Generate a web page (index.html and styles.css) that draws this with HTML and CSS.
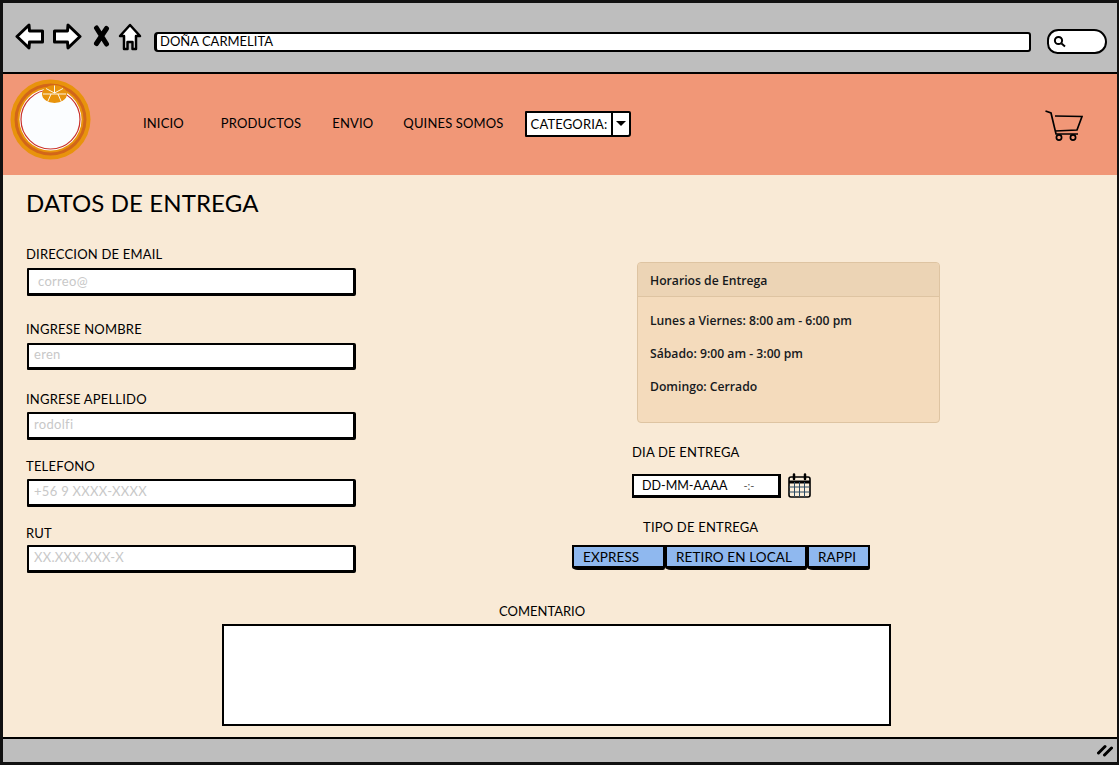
FILE: index.html
```html
<!DOCTYPE html>
<html lang="en">
<head>
    <meta charset="UTF-8">
    <meta name="viewport" content="width=device-width, initial-scale=1.0">
    <title>Doña Carmelita</title>
    <link rel="stylesheet" href="styles.css">
</head>
<body>
    <div class="window">
        <div class="toolbar">
            <svg class="tool-back" width="30" height="27" viewBox="0 0 30 27"><path d="M2 13.500 L14 2 L14.500 8 L27.500 8 L27.500 19 L14.500 19 L14 25 Z" fill="#fff" stroke="#000" stroke-width="3" stroke-linejoin="round"/></svg>
            <svg class="tool-forward" width="30" height="27" viewBox="0 0 30 27"><path d="M28 13.500 L16 2 L15.500 8 L2.500 8 L2.500 19 L15.500 19 L16 25 Z" fill="#fff" stroke="#000" stroke-width="3" stroke-linejoin="round"/></svg>
            <svg class="tool-stop" width="17" height="22" viewBox="0 0 17 22"><path d="M3.500 3 L13.500 19 M13.500 3.500 L3.500 18.500" stroke="#000" stroke-width="5" stroke-linecap="round"/></svg>
            <svg class="tool-home" width="24" height="28" viewBox="0 0 24 28"><path d="M12 2 L22 13 L18 13 L18 26 L14.500 26 L14.500 19 L9.500 19 L9.500 26 L6 26 L6 13 L2 13 Z" fill="#fff" stroke="#000" stroke-width="2.500" stroke-linejoin="round"/></svg>
            <div class="address">DOÑA CARMELITA</div>
            <div class="search">
                <svg width="13" height="13" viewBox="0 0 13 13"><circle cx="5.500" cy="5.500" r="3.600" fill="none" stroke="#000" stroke-width="2"/><path d="M8.500 8.500 L12 11.500" stroke="#000" stroke-width="2"/></svg>
            </div>
        </div>

        <header class="site-header">
            <svg class="logo" width="81" height="81" viewBox="0 0 81 81">
                <circle cx="40.500" cy="40.500" r="40" fill="#e8930c"/>
                <circle cx="40.500" cy="40.500" r="36" fill="#d2661a"/>
                <circle cx="40.500" cy="40.500" r="33" fill="#e8930c"/>
                <circle cx="40.500" cy="40.500" r="31" fill="#fff"/>
                <circle cx="40.500" cy="40.500" r="29.500" fill="#fbfdff" stroke="#c9322b" stroke-width="1.200"/>
                <ellipse cx="44.500" cy="15" rx="12.500" ry="9" fill="#e8930c"/>
                <path d="M44.500 6.500 V14 M36 9.500 L44.500 14 L53 9.500 M33 15 H56 M38 22 L41 15 M51 22 L48 15" stroke="#fff" stroke-width="0.900" fill="none"/>
            </svg>
            <nav class="nav">
                <a class="nav-inicio">INICIO</a>
                <a class="nav-productos">PRODUCTOS</a>
                <a class="nav-envio">ENVIO</a>
                <a class="nav-quines">QUINES SOMOS</a>
                <div class="category">
                    <span class="category-text">CATEGORIA:</span>
                    <span class="category-arrow"></span>
                </div>
            </nav>
            <svg class="cart" width="38" height="33" viewBox="0 0 38 33">
                <path d="M0.500 2 L6 4 L11 25 L33 25" fill="none" stroke="#000" stroke-width="1.700"/>
                <path d="M10 7 L37 7.500 L32 21 L10 22" fill="none" stroke="#000" stroke-width="1.700"/>
                <circle cx="14" cy="28.500" r="2.600" fill="none" stroke="#000" stroke-width="1.700"/>
                <circle cx="28" cy="28.500" r="2.600" fill="none" stroke="#000" stroke-width="1.700"/>
            </svg>
        </header>

        <main class="content">
            <div class="columns">
                <section class="delivery-form">
                    <h1>DATOS DE ENTREGA</h1>
                    <div class="field">
                        <label>DIRECCION DE EMAIL</label>
                        <div class="input placeholder-wide">correo@</div>
                    </div>
                    <div class="field">
                        <label>INGRESE NOMBRE</label>
                        <div class="input">eren</div>
                    </div>
                    <div class="field">
                        <label>INGRESE APELLIDO</label>
                        <div class="input">rodolfi</div>
                    </div>
                    <div class="field">
                        <label>TELEFONO</label>
                        <div class="input">+56 9 XXXX-XXXX</div>
                    </div>
                    <div class="field">
                        <label>RUT</label>
                        <div class="input">XX.XXX.XXX-X</div>
                    </div>
                </section>

                <section class="delivery-side">
                    <div class="hours-card">
                        <div class="hours-title">Horarios de Entrega</div>
                        <div class="hours-body">
                            <p>Lunes a Viernes: 8:00 am - 6:00 pm</p>
                            <p>Sábado: 9:00 am - 3:00 pm</p>
                            <p>Domingo: Cerrado</p>
                        </div>
                    </div>
                    <div class="date-label">DIA DE ENTREGA</div>
                    <div class="date-row">
                        <div class="date-input"><span>DD-MM-AAAA</span><span class="date-time">-:-</span></div>
                        <svg width="23" height="25" viewBox="0 0 23 25">
                            <rect x="1" y="4" width="21" height="20" rx="2" fill="#fbeeda" stroke="#000" stroke-width="1.600"/>
                            <path d="M1 9 H22" stroke="#000" stroke-width="3"/>
                            <path d="M1 14 H22 M1 19 H22 M6.500 9 V24 M11.500 9 V24 M16.500 9 V24" stroke="#2c4a63" stroke-width="1"/>
                            <path d="M6 6 V1.500 M17 6 V1.500" stroke="#000" stroke-width="2.500" stroke-linecap="round"/>
                        </svg>
                    </div>
                    <div class="type-label">TIPO DE ENTREGA</div>
                    <div class="type-buttons">
                        <button class="type-express">EXPRESS</button>
                        <button class="type-retiro">RETIRO EN LOCAL</button>
                        <button class="type-rappi">RAPPI</button>
                    </div>
                </section>
            </div>

            <section class="comment">
                <div class="comment-label">COMENTARIO</div>
                <div class="comment-box"></div>
            </section>
        </main>

        <footer class="statusbar">
            <svg width="16" height="13" viewBox="0 0 16 13"><path d="M1.500 9 L8 2.500 M7.500 11 L14.500 4" stroke="#000" stroke-width="3" stroke-linecap="round"/></svg>
        </footer>
    </div>
</body>
</html>
```

FILE: styles.css
```css
* {
    box-sizing: border-box;
}
html, body {
    margin: 0;
    padding: 0;
}
body {
    width: 1119px;
    height: 766px;
    overflow: hidden;
    background-color: #fff;
    font-family: "Lato", "Liberation Sans", sans-serif;
    font-size: 13px;
    letter-spacing: 0.2px;
    color: #000;
}
.window {
    width: 1119px;
    height: 765px;
    border: 3px solid #111;
    border-right-width: 2px;
    display: flex;
    flex-direction: column;
}

/* browser bar */
.toolbar {
    height: 71px;
    flex: none;
    background-color: #bebebe;
    border-bottom: 2px solid #000;
    display: flex;
    align-items: center;
    padding-left: 12px;
    padding-bottom: 4px;
}
.tool-back {
    margin-top: 2px;
}
.tool-forward {
    margin-left: 7px;
    margin-top: 2px;
}
.tool-stop {
    margin-left: 11px;
    margin-top: 0;
}
.tool-home {
    margin-left: 8px;
    margin-top: 2px;
}
.address {
    width: 877px;
    height: 20px;
    margin-left: 12px;
    margin-top: 12px;
    background-color: #fff;
    border: 2px solid #000;
    border-left-width: 3px;
    border-radius: 4px 3px 3px 4px;
    padding-left: 3px;
    font-size: 13px;
    letter-spacing: 0;
    line-height: 15px;
}
.search {
    width: 60px;
    height: 25px;
    margin-left: 16px;
    margin-top: 12px;
    background-color: #fff;
    border: 2px solid #000;
    border-radius: 14px 16px 15px 13px;
    display: flex;
    align-items: center;
    padding-left: 4px;
}

/* site header */
.site-header {
    height: 101px;
    flex: none;
    background-color: #f19777;
    display: flex;
    align-items: flex-start;
    padding-left: 7px;
}
.logo {
    margin-top: 5px;
    flex: none;
}
.nav {
    display: flex;
    align-items: center;
    height: 26px;
    margin-top: 37px;
    margin-left: 52px;
    font-size: 13px;
    letter-spacing: 0.15px;
}
.nav a {
    color: #000;
    padding-bottom: 2px;
}
.nav-productos {
    margin-left: 37px;
}
.nav-envio {
    margin-left: 31px;
}
.nav-quines {
    margin-left: 30px;
}
.category {
    width: 106px;
    height: 26px;
    margin-left: 21px;
    background-color: #fff;
    border: 2px solid #000;
    border-radius: 1px 2px 3px 1px;
    display: flex;
    align-items: center;
}
.category-text {
    flex: 1;
    padding-left: 4px;
    padding-bottom: 1px;
    white-space: nowrap;
}
.category-arrow {
    width: 18px;
    height: 100%;
    border-left: 2px solid #000;
    position: relative;
}
.category-arrow::after {
    content: "";
    position: absolute;
    left: 3px;
    top: 8px;
    border-left: 5px solid transparent;
    border-right: 5px solid transparent;
    border-top: 5px solid #000;
}
.cart {
    margin-left: auto;
    margin-right: 34px;
    margin-top: 35px;
}

/* main form */
.content {
    flex: 1;
    background-color: #f9ead6;
    padding: 0 23px;
    overflow: hidden;
}
.columns {
    display: flex;
    height: 420px;
}
.delivery-form {
    width: 330px;
    flex: none;
}
.delivery-form h1 {
    margin: 13px 0 0;
    font-size: 24px;
    font-weight: 400;
    letter-spacing: 0.1px;
    line-height: 30px;
    white-space: nowrap;
}
.field label {
    display: block;
    line-height: 16px;
    margin-bottom: 6px;
}
.field:nth-of-type(1) {
    margin-top: 28px;
}
.field:nth-of-type(2) {
    margin-top: 25px;
}
.field:nth-of-type(2) .input {
    height: 27px;
    line-height: 18px;
}
.field:nth-of-type(3) {
    margin-top: 21px;
}
.field:nth-of-type(3) label,
.field:nth-of-type(4) label {
    margin-bottom: 5px;
}
.field:nth-of-type(4) {
    margin-top: 18px;
}
.field:nth-of-type(5) {
    margin-top: 18px;
}
.field:nth-of-type(5) label {
    margin-bottom: 4px;
}
.input {
    width: 329px;
    height: 28px;
    margin-left: 1px;
    background-color: #fff;
    border: 2px solid #000;
    border-bottom-width: 3px;
    border-right-width: 3px;
    border-radius: 1px 2px 2px 1px;
    padding-left: 5px;
    line-height: 20px;
    letter-spacing: 0.3px;
    color: #c8c8c8;
}
.placeholder-wide {
    padding-left: 9px;
    padding-top: 1px;
}

/* right column */
.delivery-side {
    flex: 1;
    padding-left: 215px;
    padding-top: 87px;
}
.hours-card {
    width: 303px;
    height: 161px;
    margin-left: 66px;
    background-color: #f4dbbc;
    border: 1px solid #dec4a2;
    border-radius: 4px;
    font-family: "Open Sans", "Liberation Sans", sans-serif;
    font-size: 12.200px;
    font-weight: 600;
    letter-spacing: 0;
    color: #16191c;
}
.hours-title {
    height: 34px;
    padding: 0 12px;
    line-height: 35px;
    background-color: #ecd4b5;
    border-bottom: 1px solid #dec4a2;
    border-radius: 3px 3px 0 0;
}
.hours-body {
    padding: 16px 12px;
}
.hours-body p {
    margin: 0 0 17px;
    line-height: 16px;
}
.date-label {
    margin-top: 21px;
    margin-left: 61px;
    line-height: 16px;
}
.date-row {
    display: flex;
    align-items: center;
    gap: 7px;
    margin-top: 13px;
    margin-left: 61px;
}
.date-input {
    width: 149px;
    height: 24px;
    background-color: #fff;
    border: 2px solid #000;
    border-right-width: 3px;
    border-bottom-width: 3px;
    padding-left: 8px;
    font-size: 12.500px;
    letter-spacing: 0;
    line-height: 19px;
    display: flex;
    gap: 16px;
}
.date-time {
    color: #555;
    font-size: 11px;
}
.type-label {
    margin-top: 21px;
    margin-left: 72px;
    line-height: 16px;
}
.type-buttons {
    display: flex;
    margin-top: 10px;
    margin-left: 1px;
}
.type-buttons button {
    height: 25px;
    padding: 0 0 0 9px;
    background-color: #8fb8ef;
    border: 2px solid #000;
    border-bottom-width: 4px;
    border-radius: 0 0 2px 6px / 0 0 2px 3px;
    font-family: inherit;
    font-size: 13.500px;
    letter-spacing: 0.1px;
    text-align: left;
    color: #000;
}
.type-express {
    width: 93px;
}
.type-retiro {
    width: 142px;
}
.type-rappi {
    width: 63px;
}

/* comment */
.comment {
    margin-top: 8px;
}
.comment-label {
    margin-left: 473px;
    letter-spacing: 0;
    line-height: 16px;
}
.comment-box {
    width: 669px;
    height: 102px;
    margin-left: 196px;
    margin-top: 5px;
    background-color: #fff;
    border: 2px solid #000;
}

.statusbar {
    height: 25px;
    flex: none;
    background-color: #bebebe;
    border-top: 2px solid #000;
    display: flex;
    align-items: center;
    justify-content: flex-end;
    padding-right: 4px;
}
```
